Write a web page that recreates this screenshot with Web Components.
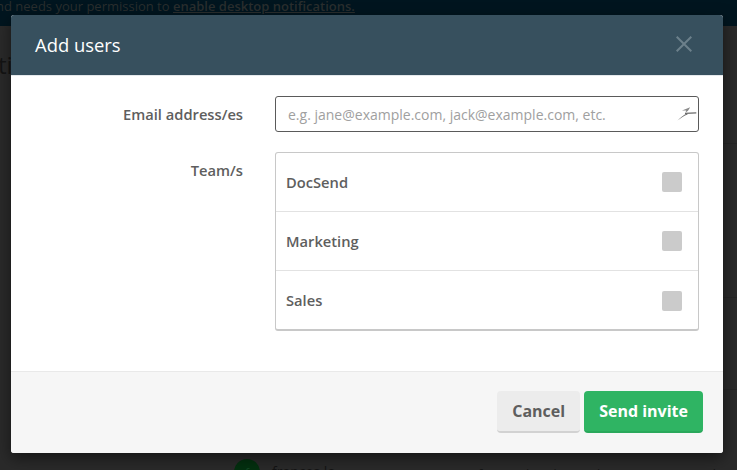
<!DOCTYPE html>
<html>
<head>
<meta charset="utf-8">
<style>
  html, body { margin: 0; height: 100%; overflow: hidden; background: #282828; }
  body { font-family: "Open Sans", sans-serif; }
  u { font-weight: 600; }
</style>
</head>
<body>
<page-backdrop>
  <span slot="banner">nd needs your permission to <u>enable desktop notifications.</u></span>
</page-backdrop>
<add-users-modal>
  <span slot="title">Add users</span>
  <form-row label="Email address/es">
    <email-input placeholder="e.g. jane@example.com, jack@example.com, etc."></email-input>
  </form-row>
  <form-row label="Team/s">
    <team-list>
      <team-row>DocSend</team-row>
      <team-row>Marketing</team-row>
      <team-row>Sales</team-row>
    </team-list>
  </form-row>
  <app-button slot="footer">Cancel</app-button>
  <app-button slot="footer" kind="primary">Send invite</app-button>
</add-users-modal>

<script>
class PageBackdrop extends HTMLElement {
  constructor() {
    super();
    this.attachShadow({ mode: "open" }).innerHTML = `
      <style>
        :host { display: block; position: absolute; inset: 0; overflow: hidden; background: #2a2a2a; }
        .banner {
          height: 26px; background: #00151f; color: #2a2e2e;
          font: 400 13px/12px "Open Sans", sans-serif;
          white-space: nowrap; margin-left: -4px;
        }
        .crumb { position: absolute; left: -2px; top: 48px; font: 400 24px "Open Sans", sans-serif; color: #141414; }
        .line { position: absolute; left: 200px; right: 0; height: 1px; background: #252525; }
        .row { position: absolute; left: 234px; right: 0; top: 459px; height: 26px; color: #141414; font: 400 14px/20px "Open Sans", sans-serif; }
        .row span { position: absolute; top: 3px; white-space: nowrap; }
        .row span.dim { top: 5px; font-size: 13px; }
        .avatar { position: absolute; left: 0; top: 0; width: 26px; height: 26px; border-radius: 50%; background: #03300f; color: #134a24; text-align: center; font-size: 12px; line-height: 30px; }
      </style>
      <div class="banner"><slot name="banner"></slot></div>
      <div class="crumb">ti</div>
      <div class="line" style="top:143px"></div>
      <div class="line" style="top:297px"></div>
      <div class="line" style="top:389px"></div>
      <div class="row">
        <div class="avatar">f</div>
        <span style="left:38px">frances.lo</span>
        <span class="dim" style="left:244px">frances.lo@docsend.com</span>
        <span class="dim" style="left:428px">DocSend</span>
      </div>`;
  }
}

class AddUsersModal extends HTMLElement {
  constructor() {
    super();
    this.attachShadow({ mode: "open" }).innerHTML = `
      <style>
        :host {
          display: flex; flex-direction: column; position: absolute;
          left: 11px; top: 15px; width: 712px; height: 438px;
          background: #fff; border-radius: 3px; overflow: hidden;
          box-shadow: 0 5px 15px rgba(0,0,0,.5);
        }
        header {
          height: 61px; box-sizing: border-box; flex: none; background: #37505e; color: #fff;
          display: flex; align-items: center; justify-content: space-between;
          padding: 0 31px 2px 24px; font: 500 18.4px "Open Sans", sans-serif;
          border-bottom: 1px solid #e5e9ec;
        }
        header svg { display: block; }
        main { flex: 1; padding: 20px 24px 0 0; display: flex; flex-direction: column; gap: 20px; }
        footer {
          flex: none; height: 82px; box-sizing: border-box; background: #f6f6f6;
          border-top: 1px solid #e9e9e9; padding: 19px 20px 0 0;
          display: flex; justify-content: flex-end; gap: 4px;
        }
      </style>
      <header>
        <slot name="title"></slot>
        <svg width="16" height="16" viewBox="0 0 16 16" fill="none" stroke="#6c808b" stroke-width="2"><path d="M.7.7l14.6 14.6M15.3.7L.7 15.3"/></svg>
      </header>
      <main><slot></slot></main>
      <footer><slot name="footer"></slot></footer>`;
  }
}

class FormRow extends HTMLElement {
  constructor() {
    super();
    this.attachShadow({ mode: "open" }).innerHTML = `
      <style>
        :host { display: grid; grid-template-columns: 232px 1fr; column-gap: 32px; }
        label {
          text-align: right; color: #5e5e5e;
          font: 600 14.7px/19px "Open Sans", sans-serif;
          padding-top: 9px;
        }
      </style>
      <label></label>
      <div><slot></slot></div>`;
    this.shadowRoot.querySelector("label").textContent = this.getAttribute("label");
  }
}

class EmailInput extends HTMLElement {
  constructor() {
    super();
    this.attachShadow({ mode: "open" }).innerHTML = `
      <style>
        :host {
          display: flex; align-items: center; justify-content: space-between; box-sizing: border-box;
          height: 36px; border: 1px solid #5a5a5a; border-radius: 3px; background: #fff;
          padding: 0 1px 0 12px;
        }
        span { color: #a0a0a0; font: 400 14px "Open Sans", sans-serif; white-space: nowrap; }
        svg { display: block; }
      </style>
      <span></span>
      <svg width="20" height="16" viewBox="0 0 20 16" fill="none">
        <path d="M.3 14.8C3.5 11.5 6.5 9 10 7.4L10.6 8.6C7 9.8 4 12 .3 14.8z" fill="#6a6a6a"/>
        <path d="M8 7.3L19.3 6.9" stroke="#6a6a6a" stroke-width="1.3"/>
        <path d="M5 4.6L13.2 1.2 11 4.8 8.4 6.8 9.2 4.4z" fill="#8a8a8a"/>
      </svg>`;
    this.shadowRoot.querySelector("span").textContent = this.getAttribute("placeholder");
  }
}

class TeamList extends HTMLElement {
  constructor() {
    super();
    this.attachShadow({ mode: "open" }).innerHTML = `
      <style>
        :host {
          display: block; border: 1px solid #c8c8c8; border-bottom-width: 2px;
          border-radius: 3px; background: #fff;
        }
        ::slotted(team-row:not(:last-child)) { border-bottom: 1px solid #e2e2e2; }
      </style>
      <slot></slot>`;
  }
}

class TeamRow extends HTMLElement {
  constructor() {
    super();
    this.attachShadow({ mode: "open" }).innerHTML = `
      <style>
        :host {
          display: flex; align-items: center; justify-content: space-between;
          height: 59px; box-sizing: border-box; padding: 0 16px 0 10px;
          color: #5e5e5e; font: 600 14.7px "Open Sans", sans-serif;
        }
        :host(:last-child) { height: 58px; }
        :host(:last-child) i { margin-top: 1px; }
        i { width: 20px; height: 20px; border-radius: 2px; background: #cbcbcb; display: block; }
      </style>
      <slot></slot><i></i>`;
  }
}

class AppButton extends HTMLElement {
  constructor() {
    super();
    this.attachShadow({ mode: "open" }).innerHTML = `
      <style>
        :host {
          display: flex; align-items: center; justify-content: center; box-sizing: border-box;
          height: 42px; padding: 0 15px; border-radius: 4px;
          font: 700 16px "Open Sans", sans-serif;
          background: #ececec; color: #5e5e5e; border-bottom: 2px solid #d2d2d2;
        }
        :host([kind="primary"]) { background: #2fb463; color: #fff; border-bottom-color: #2aa85b; }
      </style>
      <slot></slot>`;
  }
}

customElements.define("page-backdrop", PageBackdrop);
customElements.define("add-users-modal", AddUsersModal);
customElements.define("form-row", FormRow);
customElements.define("email-input", EmailInput);
customElements.define("team-list", TeamList);
customElements.define("team-row", TeamRow);
customElements.define("app-button", AppButton);
</script>
</body>
</html>
